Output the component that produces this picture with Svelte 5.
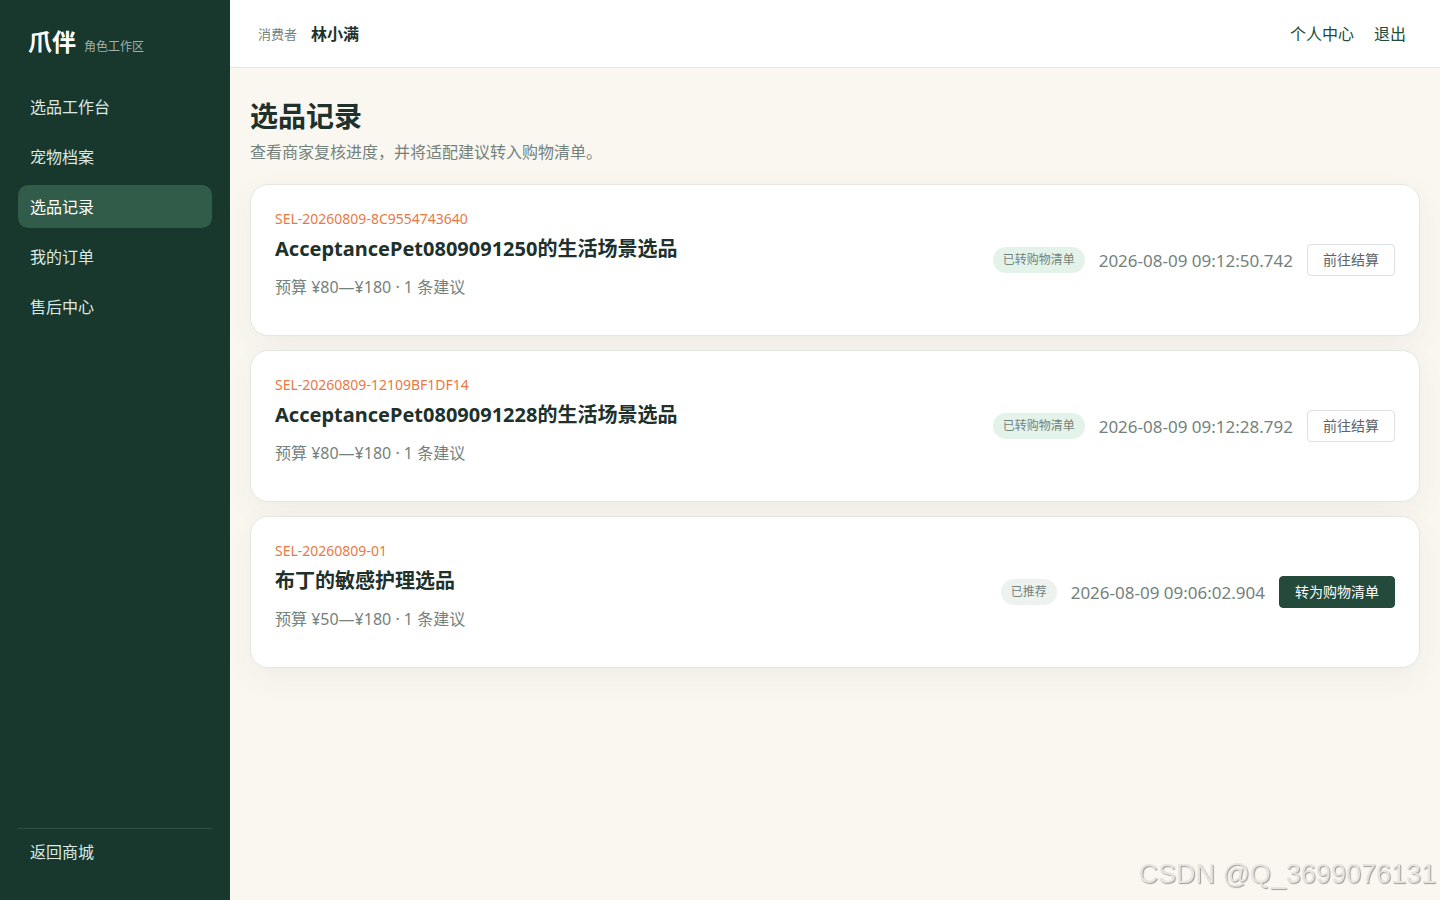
<script lang="ts">
  interface NavItem {
    label: string;
    href: string;
  }

  interface SelectionRecord {
    code: string;
    title: string;
    budget: string;
    count: number;
    status: string;
    converted: boolean;
    createdAt: string;
  }

  const navItems: NavItem[] = [
    { label: '选品工作台', href: '#/workbench' },
    { label: '宠物档案', href: '#/pets' },
    { label: '选品记录', href: '#/selections' },
    { label: '我的订单', href: '#/orders' },
    { label: '售后中心', href: '#/after-sales' }
  ];

  const currentPath = '#/selections';

  let records: SelectionRecord[] = [
    {
      code: 'SEL-20260809-8C9554743640',
      title: 'AcceptancePet0809091250的生活场景选品',
      budget: '¥80—¥180',
      count: 1,
      status: '已转购物清单',
      converted: true,
      createdAt: '2026-08-09 09:12:50.742'
    },
    {
      code: 'SEL-20260809-12109BF1DF14',
      title: 'AcceptancePet0809091228的生活场景选品',
      budget: '¥80—¥180',
      count: 1,
      status: '已转购物清单',
      converted: true,
      createdAt: '2026-08-09 09:12:28.792'
    },
    {
      code: 'SEL-20260809-01',
      title: '布丁的敏感护理选品',
      budget: '¥50—¥180',
      count: 1,
      status: '已推荐',
      converted: false,
      createdAt: '2026-08-09 09:06:02.904'
    }
  ];
</script>

<div class="workspace">
  <aside class="sidebar">
    <div class="brand">
      <strong>爪伴</strong>
      <small>角色工作区</small>
    </div>
    <nav class="nav">
      {#each navItems as item (item.href)}
        <a href={item.href} class="nav-item" class:active={item.href === currentPath}>{item.label}</a>
      {/each}
    </nav>
    <div class="sidebar-footer">
      <a href="#/">返回商城</a>
    </div>
  </aside>

  <div class="body">
    <header class="topbar">
      <div class="user">
        <span class="role">消费者</span>
        <strong>林小满</strong>
      </div>
      <div class="account">
        <a href="#/profile">个人中心</a>
        <button type="button">退出</button>
      </div>
    </header>

    <main class="content">
      <h1>选品记录</h1>
      <p class="subtitle">查看商家复核进度，并将适配建议转入购物清单。</p>

      <div class="records">
        {#each records as record (record.code)}
          <article class="card">
            <div class="info">
              <span class="code">{record.code}</span>
              <h2>{record.title}</h2>
              <p>预算 {record.budget} · {record.count} 条建议</p>
            </div>
            <div class="meta">
              <span class="status" class:converted={record.converted}>{record.status}</span>
              <time>{record.createdAt}</time>
              <button type="button" class="action" class:primary={!record.converted}>
                {record.converted ? '前往结算' : '转为购物清单'}
              </button>
            </div>
          </article>
        {/each}
      </div>
    </main>
  </div>
</div>

<div class="watermark">CSDN @Q_3699076131</div>

<style>
  :global(body) {
    margin: 0;
    background: #faf7f0;
    color: #20312b;
    font-family: "Noto Sans", "Noto Sans CJK SC", sans-serif;
    font-size: 16px;
  }

  .workspace {
    display: flex;
    min-height: 100vh;
  }

  .sidebar {
    display: flex;
    flex-direction: column;
    flex: 0 0 230px;
    box-sizing: border-box;
    padding: 23px 18px 24px;
    background: #18372d;
  }

  .brand {
    display: flex;
    align-items: baseline;
    gap: 8px;
    padding: 0 10px;
    margin-bottom: 20px;
    line-height: 37px;
    color: #fff;
  }

  .brand strong {
    font-size: 24px;
  }

  .brand small {
    font-size: 12px;
    color: #a3afab;
  }

  .nav {
    display: flex;
    flex-direction: column;
    gap: 7px;
  }

  .nav-item {
    padding: 11px 12px 10px;
    border-radius: 10px;
    line-height: 22px;
    color: #dce9e2;
    text-decoration: none;
  }

  .nav-item.active {
    background: #315c49;
    color: #fff;
  }

  .sidebar-footer {
    margin-top: auto;
    padding: 13px 12px;
    border-top: 1px solid #2f4f43;
    line-height: 21px;
  }

  .sidebar-footer a {
    color: #dce9e2;
    text-decoration: none;
  }

  .body {
    flex: 1;
    min-width: 0;
  }

  .topbar {
    display: flex;
    align-items: center;
    justify-content: space-between;
    box-sizing: border-box;
    height: 68px;
    padding: 0 34px 0 28px;
    border-bottom: 1px solid #e3e7e2;
    background: #fff;
    line-height: 22px;
  }

  .user {
    display: flex;
    align-items: center;
    gap: 14px;
  }

  .role {
    font-size: 13px;
    color: #74827c;
  }

  .account {
    display: flex;
    align-items: center;
    gap: 20px;
  }

  .account a,
  .account button {
    padding: 0;
    border: 0;
    background: none;
    font: inherit;
    color: #234a3b;
    text-decoration: none;
    cursor: pointer;
  }

  .content {
    padding: 29px 20px;
  }

  h1 {
    margin: 0 0 6px;
    font-size: 28px;
    line-height: 38px;
  }

  .subtitle {
    margin: 0 0 21px;
    line-height: 22px;
    color: #74827c;
  }

  .records {
    display: flex;
    flex-direction: column;
    gap: 14px;
  }

  .card {
    display: flex;
    align-items: center;
    justify-content: space-between;
    gap: 24px;
    padding: 24px;
    border: 1px solid #e3e7e2;
    border-radius: 18px;
    background: #fff;
    box-shadow: 0 10px 30px rgba(24, 55, 45, 0.05);
  }

  .code {
    display: block;
    font-size: 14px;
    line-height: 20px;
    color: #e87945;
  }

  h2 {
    margin: 6px 0 14px;
    font-size: 20px;
    line-height: 27px;
  }

  .info p {
    margin: 0 0 13px;
    line-height: 22px;
    color: #74827c;
  }

  .meta {
    display: flex;
    align-items: center;
    gap: 14px;
    color: #74827c;
  }

  .meta time {
    font-size: 17px;
  }

  .status {
    padding: 0 10px;
    border-radius: 13px;
    background: #edf2ef;
    font-size: 12px;
    line-height: 26px;
  }

  .status.converted {
    background: #e4f3ea;
  }

  .action {
    height: 32px;
    padding: 0 15px;
    border: 1px solid #dcdfe6;
    border-radius: 4px;
    background: #fff;
    font-family: inherit;
    font-size: 14px;
    line-height: 20px;
    color: #606266;
    cursor: pointer;
  }

  .action.primary {
    border-color: #234a3b;
    background: #234a3b;
    color: #fff;
  }

  .watermark {
    position: fixed;
    right: 4px;
    bottom: 8px;
    font-family: "Liberation Sans", Arial, sans-serif;
    font-size: 27px;
    line-height: 36px;
    color: #e6e4df;
    text-shadow: 1px 1px 1px #9c9c9c;
    pointer-events: none;
  }
</style>
